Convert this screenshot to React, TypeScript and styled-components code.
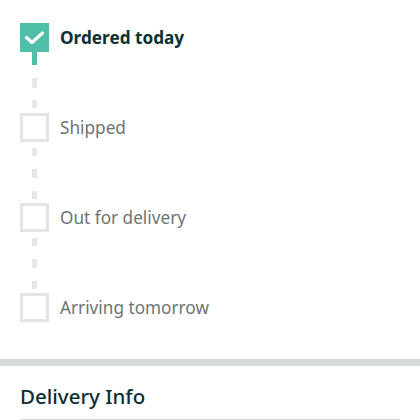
import React from 'react';
import styled, { createGlobalStyle } from 'styled-components';

const GlobalStyle = createGlobalStyle`
  body {
    margin: 0;
    background: #ffffff;
    font-family: 'Noto Sans', 'Open Sans', sans-serif;
  }
`;

const Page = styled.div`
  width: 420px;
  height: 420px;
  overflow: hidden;
  background: #fff;
`;

const Tracker = styled.div`
  padding: 23px 20px 37px;
  display: flex;
  flex-direction: column;
`;

const Step = styled.div`
  display: flex;
  align-items: center;
  gap: 11px;
  height: 29px;
`;

const Box = styled.div<{ $done?: boolean }>`
  box-sizing: border-box;
  width: 29px;
  height: 29px;
  flex-shrink: 0;
  display: flex;
  align-items: center;
  justify-content: center;
  background: ${(p) => (p.$done ? '#4fbfa9' : '#fff')};
  border: ${(p) => (p.$done ? 'none' : '3px solid #e4e4e4')};
`;

const Label = styled.span<{ $done?: boolean }>`
  font-size: 17.2px;
  font-weight: ${(p) => (p.$done ? 700 : 400)};
  color: ${(p) => (p.$done ? '#0c2f33' : '#6f7373')};
`;

const Connector = styled.div<{ $done?: boolean }>`
  width: 5px;
  height: 61px;
  margin-left: 12px;
  background: ${(p) =>
    p.$done
      ? 'linear-gradient(#4fbfa9 0 13px, transparent 13px 26px, #e7e7e7 26px 36px, transparent 36px 48px, #e7e7e7 48px 56px, transparent 56px)'
      : 'linear-gradient(transparent 0 6px, #e7e7e7 6px 14px, transparent 14px 27px, #e7e7e7 27px 36px, transparent 36px 49px, #e7e7e7 49px 57px, transparent 57px)'};
`;

const Divider = styled.div`
  height: 7px;
  background: #d5dbdb;
`;

const Section = styled.div`
  padding: 16px 20px 0;
`;

const SectionTitle = styled.h2`
  margin: 0;
  padding-bottom: 9px;
  font-size: 20.5px;
  font-weight: 500;
  color: #0c2f33;
  border-bottom: 1px solid #d5d9d9;
`;

const steps = [
  { label: 'Ordered today', done: true },
  { label: 'Shipped', done: false },
  { label: 'Out for delivery', done: false },
  { label: 'Arriving tomorrow', done: false },
];

function Check() {
  return (
    <svg width="21" height="14" viewBox="0 0 21 14">
      <path
        d="M2.5 6.5 L8 11.5 L18.5 2"
        fill="none"
        stroke="#fff"
        strokeWidth="3.2"
        strokeLinecap="round"
        strokeLinejoin="round"
      />
    </svg>
  );
}

export default function App() {
  return (
    <Page>
      <GlobalStyle />
      <Tracker>
        {steps.map((s, i) => (
          <React.Fragment key={s.label}>
            <Step>
              <Box $done={s.done}>{s.done && <Check />}</Box>
              <Label $done={s.done}>{s.label}</Label>
            </Step>
            {i < steps.length - 1 && <Connector $done={s.done} />}
          </React.Fragment>
        ))}
      </Tracker>
      <Divider />
      <Section>
        <SectionTitle>Delivery Info</SectionTitle>
      </Section>
    </Page>
  );
}
